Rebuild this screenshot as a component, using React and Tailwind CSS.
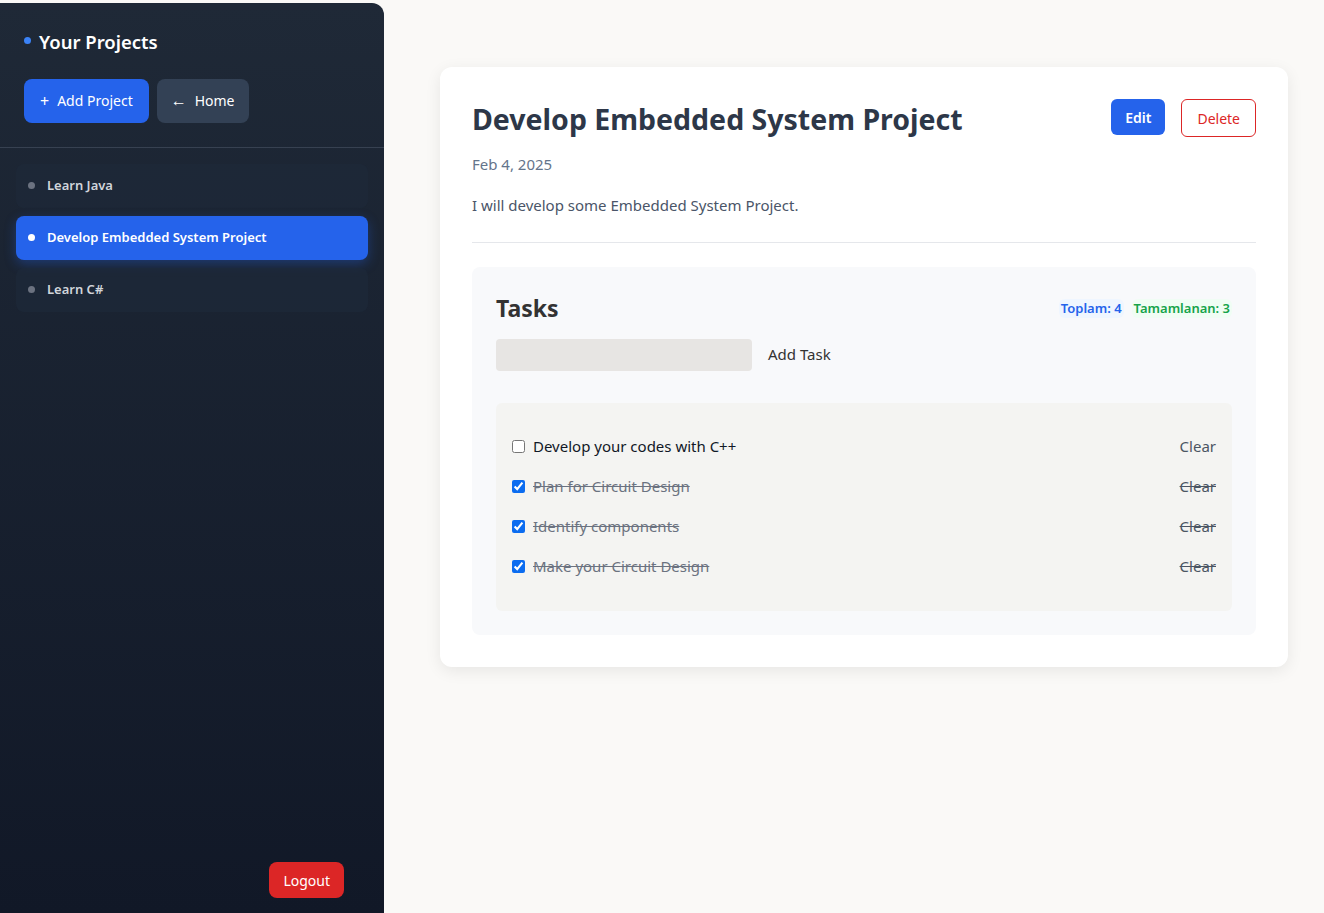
import React from 'react';

const projects = [
  { id: 1, name: 'Learn Java' },
  { id: 2, name: 'Develop Embedded System Project' },
  { id: 3, name: 'Learn C#' },
];

const tasks = [
  { id: 1, text: 'Develop your codes with C++', done: false },
  { id: 2, text: 'Plan for Circuit Design', done: true },
  { id: 3, text: 'Identify components', done: true },
  { id: 4, text: 'Make your Circuit Design', done: true },
];

// Sidebar with project list
const Sidebar = ({ activeId }) => (
  <aside className="w-[384px] shrink-0 mt-[3px] rounded-tr-xl bg-gradient-to-b from-[#1f2937] to-[#111827] flex flex-col">
    <div className="px-6 pt-[25px] pb-6 border-b border-[#374151]">
      <h2 className="flex items-center gap-2 text-[18.5px] font-semibold text-white">
        <span className="w-[7px] h-[7px] rounded-full bg-[#3b82f6] -mt-0.5" />
        Your Projects
      </h2>
      <div className="flex gap-2 mt-[23px]">
        <button className="h-11 px-4 rounded-lg bg-[#2563eb] text-white text-[14px] flex items-center gap-2">
          <span className="text-[16px] leading-none">+</span>
          Add Project
        </button>
        <button className="h-11 px-[14px] rounded-lg bg-[#334155] text-white text-[14px] flex items-center gap-2">
          <span className="text-[16px] leading-none -mt-0.5">←</span>
          Home
        </button>
      </div>
    </div>
    <ul className="px-4 pt-4 flex flex-col gap-2">
      {projects.map((p) => {
        const active = p.id === activeId;
        return (
          <li
            key={p.id}
            className={
              active
                ? 'h-11 px-3 rounded-lg bg-[#2563eb] shadow-[0_4px_12px_rgba(37,99,235,0.35)] flex items-center gap-3 text-white text-[13px] font-semibold'
                : 'h-11 px-3 rounded-lg bg-[#1e293b]/60 flex items-center gap-3 text-[#d1d5db] text-[13px] font-semibold'
            }
          >
            <span className={active ? 'w-[7px] h-[7px] rounded-full bg-white' : 'w-[7px] h-[7px] rounded-full bg-[#6b7280]'} />
            {p.name}
          </li>
        );
      })}
    </ul>
    <div className="mt-auto flex justify-end px-10 pb-[15px]">
      <button className="h-9 px-[14px] rounded-lg bg-[#dc2626] text-white text-[14px]">Logout</button>
    </div>
  </aside>
);

const TaskRow = ({ task }) => (
  <div className="h-10 flex items-center justify-between">
    <label className="flex items-center gap-2">
      <input type="checkbox" defaultChecked={task.done} className="w-[13px] h-[13px] accent-[#0b6cf0]" />
      <span className={task.done ? 'text-[15px] text-[#6b7280] line-through' : 'text-[15px] text-[#111827]'}>
        {task.text}
      </span>
    </label>
    <span className={task.done ? 'text-[15px] text-[#4b5563] line-through' : 'text-[15px] text-[#4b5563]'}>Clear</span>
  </div>
);

export default function App() {
  return (
    <div className="w-[1324px] h-[913px] flex bg-[#faf9f7] overflow-hidden" style={{ fontFamily: '"Noto Sans", "Open Sans", sans-serif' }}>
      <Sidebar activeId={2} />
      <main className="flex-1 pl-14 pr-9 pt-[67px]">
        <div className="bg-white rounded-xl shadow-[0_4px_16px_rgba(0,0,0,0.08)] px-8 pt-8 pb-8">
          <div className="flex items-start justify-between">
            <h1 className="text-[28.5px] font-bold text-[#2d3748] leading-[40px]">Develop Embedded System Project</h1>
            <div className="flex gap-4">
              <button className="h-9 px-[14px] rounded-md bg-[#2563eb] text-white text-[14px] font-semibold">Edit</button>
              <button className="h-[38px] px-[15px] rounded-md border border-[#dc2626] text-[#dc2626] text-[14px]">Delete</button>
            </div>
          </div>
          <p className="mt-[14px] text-[15px] text-[#64748b]">Feb 4, 2025</p>
          <p className="mt-[18px] text-[15px] text-[#4a5568]">I will develop some Embedded System Project.</p>
          <div className="mt-[26px] border-t border-[#e5e7eb]" />
          <section className="mt-6 bg-[#f8f9fb] rounded-lg p-6">
            <div className="flex items-center justify-between">
              <h3 className="text-[23px] font-bold text-[#333333]">Tasks</h3>
              <div className="flex gap-2 text-[13px] font-semibold">
                <span className="px-0.5 rounded-md bg-[#eff6ff] text-[#2563eb]">Toplam: 4</span>
                <span className="px-0.5 rounded-md bg-[#f0fdf4] text-[#16a34a]">Tamamlanan: 3</span>
              </div>
            </div>
            <div className="mt-[13px] flex items-center gap-4">
              <input className="w-[256px] h-8 bg-[#e7e5e3] rounded-sm outline-none px-2" />
              <button className="text-[15px] text-[#333333]">Add Task</button>
            </div>
            <div className="mt-8 bg-[#f4f4f2] rounded-md px-4 pt-6 pb-6">
              {tasks.map((t) => (
                <TaskRow key={t.id} task={t} />
              ))}
            </div>
          </section>
        </div>
      </main>
    </div>
  );
}
